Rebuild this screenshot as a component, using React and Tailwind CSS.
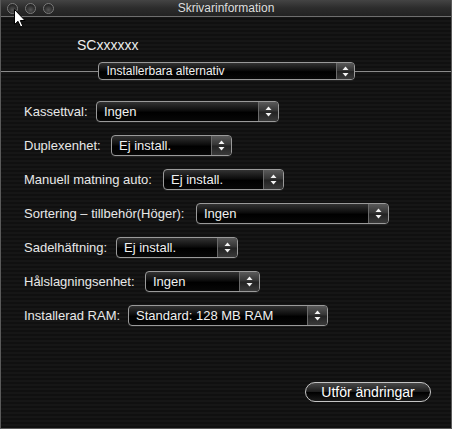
import React from "react";

const rows = [
  { label: "Kassettval:", value: "Ingen", lw: "w-[72px]", pw: "w-[183px]" },
  { label: "Duplexenhet:", value: "Ej install.", lw: "w-[87px]", pw: "w-[121px]" },
  { label: "Manuell matning auto:", value: "Ej install.", lw: "w-[139px]", pw: "w-[121px]" },
  { label: "Sortering – tillbehör(Höger):", value: "Ingen", lw: "w-[172px]", pw: "w-[193px]" },
  { label: "Sadelhäftning:", value: "Ej install.", lw: "w-[92px]", pw: "w-[122px]" },
  { label: "Hålslagningsenhet:", value: "Ingen", lw: "w-[121px]", pw: "w-[115px]" },
  { label: "Installerad RAM:", value: "Standard: 128 MB RAM", lw: "w-[104px]", pw: "w-[200px]" },
];

function Arrows() {
  return (
    <svg width="7" height="11" viewBox="0 0 7 11" className="block">
      <path d="M3.5 0.5 L6.5 4 L0.5 4 Z" fill="#f2f2f2" />
      <path d="M3.5 10.5 L6.5 7 L0.5 7 Z" fill="#f2f2f2" />
    </svg>
  );
}

function Popup({ value, width, small }) {
  return (
    <div
      className={`${width} ${small ? "h-[18px] text-[12px]" : "h-[21px] text-[13px]"} flex items-stretch rounded-[4px] border border-[#9a9a9a] bg-[linear-gradient(to_bottom,#333_0%,#0c0c0c_45%,#000_55%,#070707_100%)] shadow-[0_1px_0_rgba(255,255,255,0.06)] overflow-hidden`}
    >
      <div className={`flex-1 flex items-center ${small ? "pl-[8px]" : "pl-[7px]"} text-[#f0f0f0] leading-none whitespace-nowrap`}>
        {value}
      </div>
      <div className={`${small ? "w-[18px]" : "w-[20px]"} flex items-center justify-center border-l border-[#6a6a6a] bg-[linear-gradient(to_bottom,#5a5a5a_0%,#333_48%,#222_52%,#3a3a3a_100%)]`}>
        <Arrows />
      </div>
    </div>
  );
}

function Light() {
  return (
    <div className="w-[11px] h-[11px] rounded-full border border-[#7a7a7a] bg-[radial-gradient(circle_at_50%_65%,#555_0%,#2a2a2a_60%,#1a1a1a_100%)]" />
  );
}

export default function App() {
  return (
    <div
      className="relative w-[452px] h-[429px] flex flex-col overflow-hidden border-x border-b border-[#5a5a5a] bg-[repeating-linear-gradient(to_bottom,#161616_0px,#161616_2px,#101010_2px,#101010_4px)]"
      style={{ fontFamily: '"Liberation Sans", Arial, sans-serif' }}
    >
      {/* title bar */}
      <div className="h-[17px] grid grid-cols-[1fr_auto_1fr] items-center border-b border-[#6e6e6e] bg-[linear-gradient(to_bottom,#444_0%,#2c2c2c_50%,#222_100%)]">
        <div className="flex items-center gap-[7px] pl-[6px]">
          <Light />
          <Light />
          <Light />
        </div>
        <div className="text-[12px] text-[#dedede] leading-none">Skrivarinformation</div>
        <div />
      </div>

      {/* printer name */}
      <div className="mt-[20px] pl-[76px] text-[14px] leading-[16px] text-[#ececec]">SCxxxxxx</div>

      {/* separator with popup */}
      <div className="mt-[9px] flex items-center">
        <div className="flex-1 h-px bg-[#8a8a8a]" />
        <Popup value="Installerbara alternativ" width="w-[257px]" small />
        <div className="flex-1 h-px bg-[#8a8a8a]" />
      </div>

      {/* rows */}
      <div className="mt-[21px] flex flex-col gap-[13px] pl-[23px]">
        {rows.map((r) => (
          <div key={r.label} className="flex items-center h-[21px]">
            <div className={`${r.lw} text-[13px] text-[#e8e8e8] whitespace-nowrap leading-none`}>{r.label}</div>
            <Popup value={r.value} width={r.pw} />
          </div>
        ))}
      </div>

      {/* footer button */}
      <div className="mt-auto pb-[26px] pr-[20px] flex justify-end">
        <button className="w-[126px] h-[20px] rounded-full border border-[#c4c4c4] bg-[linear-gradient(to_bottom,#4a4a4a_0%,#1c1c1c_48%,#000_52%,#1a1a1a_100%)] text-[14px] leading-none text-white flex items-center justify-center">
          Utför ändringar
        </button>
      </div>

      {/* mouse cursor */}
      <svg className="absolute left-[13px] top-[9px]" width="12" height="19" viewBox="0 0 12 19">
        <path d="M0.5 0.5 L0.5 15.5 L4 12.3 L6.6 18 L8.8 17 L6.3 11.5 L11 11.5 Z" fill="#ffffff" stroke="#000" strokeWidth="1" strokeLinejoin="round" />
      </svg>
    </div>
  );
}
